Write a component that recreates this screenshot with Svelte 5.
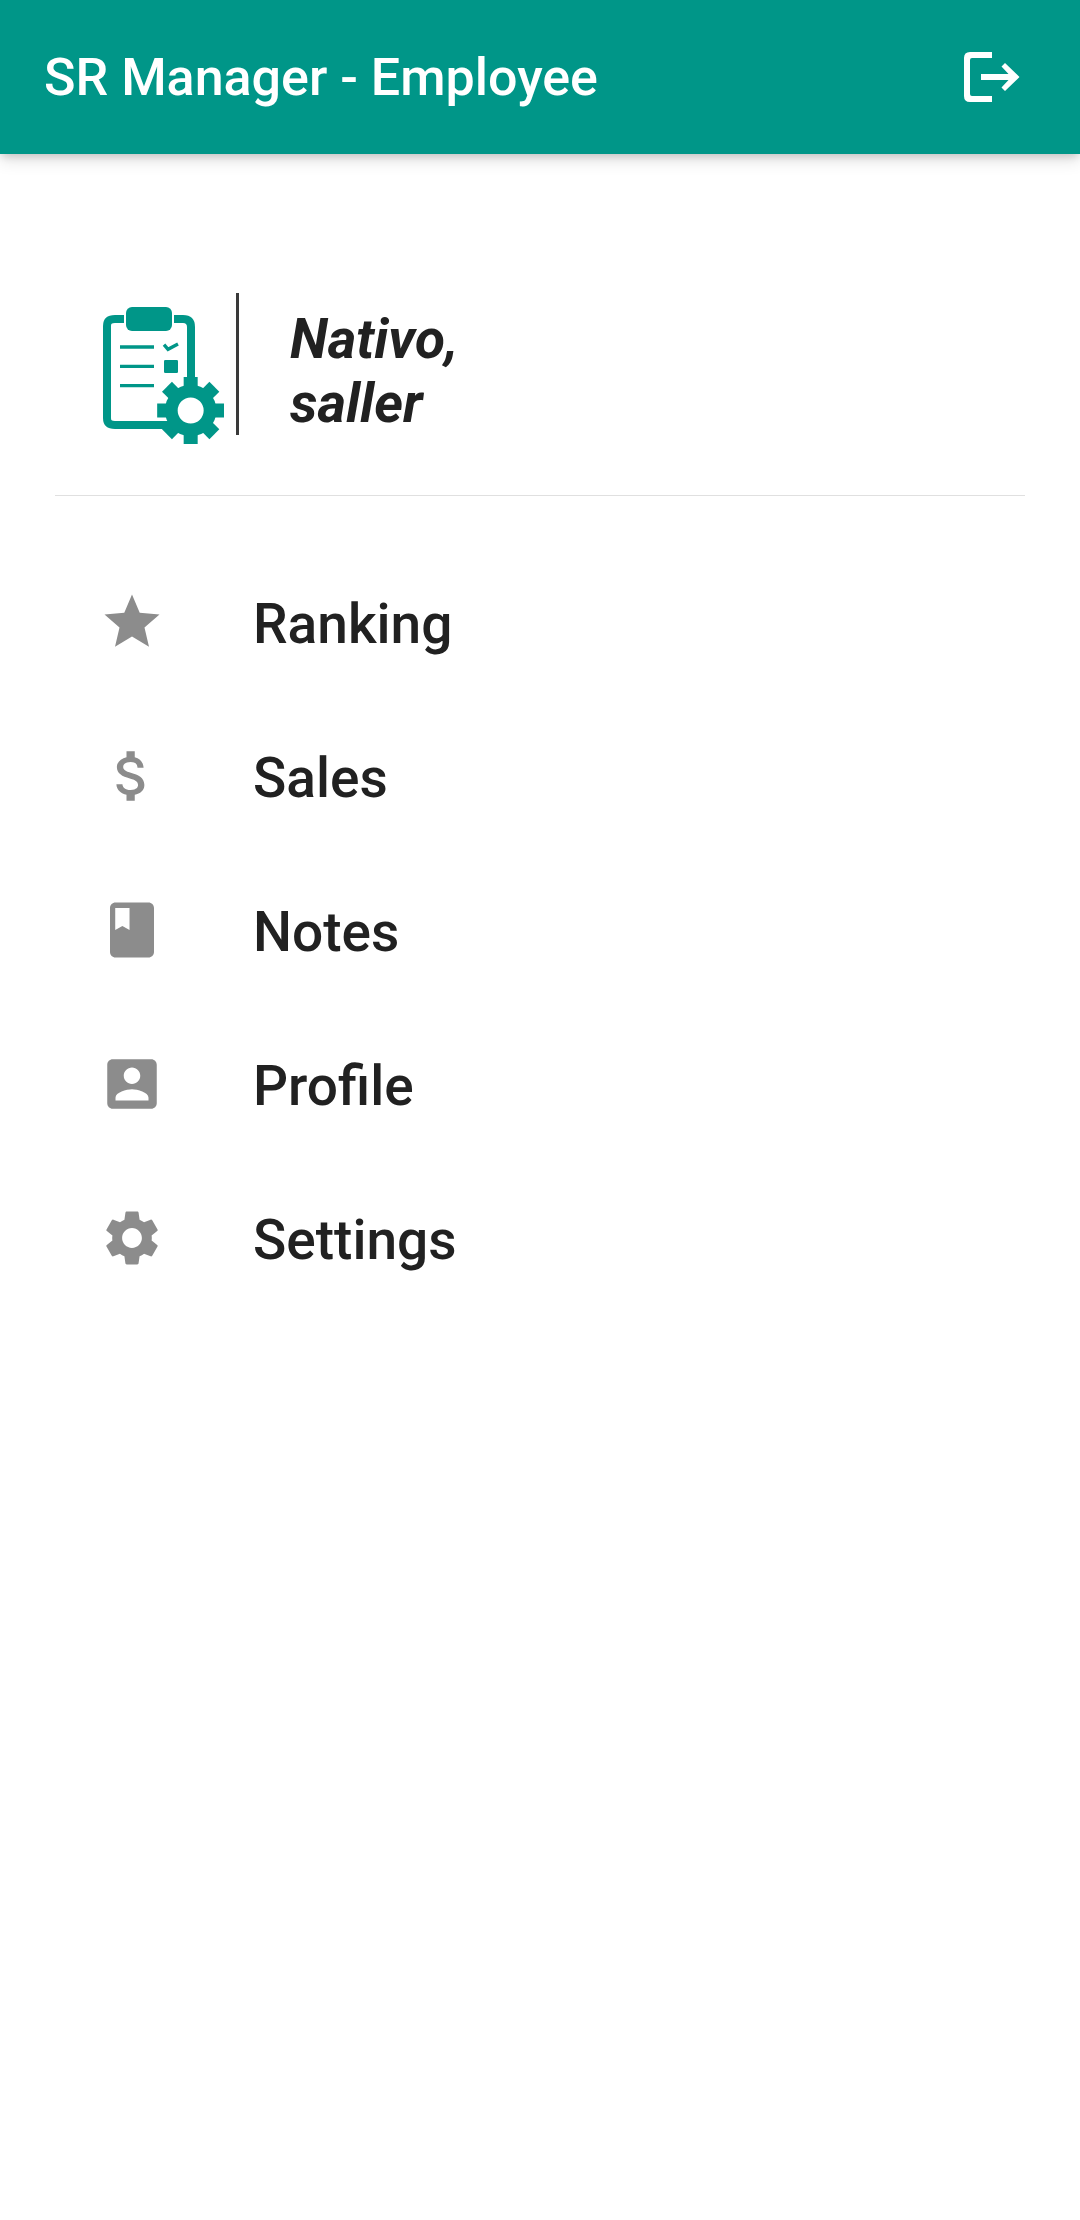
<script>
  const items = [
    {
      label: 'Ranking',
      path: 'M12 17.27 18.18 21l-1.64-7.03L22 9.24l-7.19-.61L12 2 9.19 8.63 2 9.24l5.46 4.73L5.82 21z'
    },
    {
      label: 'Sales',
      path: 'M11.8 10.9c-2.27-.59-3-1.2-3-2.15 0-1.09 1.01-1.85 2.7-1.85 1.78 0 2.44.85 2.5 2.1h2.21c-.07-1.72-1.12-3.3-3.21-3.81V3h-3v2.16c-1.94.42-3.5 1.68-3.5 3.61 0 2.31 1.91 3.46 4.7 4.13 2.5.6 3 1.48 3 2.41 0 .69-.49 1.79-2.7 1.79-2.06 0-2.87-.92-2.98-2.1h-2.2c.12 2.19 1.76 3.42 3.68 3.83V21h3v-2.15c1.95-.37 3.5-1.5 3.5-3.55 0-2.84-2.43-3.81-4.7-4.4z'
    },
    {
      label: 'Notes',
      path: 'M18 2H6c-1.1 0-2 .9-2 2v16c0 1.1.9 2 2 2h12c1.1 0 2-.9 2-2V4c0-1.1-.9-2-2-2zM5.9 4h5.2v8l-2.6-1.5L5.9 12z'
    },
    {
      label: 'Profile',
      path: 'M3 5v14c0 1.1.89 2 2 2h14c1.1 0 2-.9 2-2V5c0-1.1-.9-2-2-2H5c-1.11 0-2 .9-2 2zm12 4c0 1.66-1.34 3-3 3s-3-1.34-3-3 1.34-3 3-3 3 1.34 3 3zm-9 8c0-2 4-3.1 6-3.1s6 1.1 6 3.1v1H6v-1z'
    },
    {
      label: 'Settings',
      path: 'M19.14 12.94c.04-.3.06-.61.06-.94 0-.32-.02-.64-.07-.94l2.03-1.58c.18-.14.23-.41.12-.61l-1.92-3.32c-.12-.22-.37-.29-.59-.22l-2.39.96c-.5-.38-1.03-.7-1.62-.94l-.36-2.54c-.04-.24-.24-.41-.48-.41h-3.84c-.24 0-.43.17-.47.41l-.36 2.54c-.59.24-1.13.57-1.62.94l-2.39-.96c-.22-.08-.47 0-.59.22L2.74 8.87c-.12.21-.08.47.12.61l2.03 1.58c-.05.3-.09.63-.09.94s.02.64.07.94l-2.03 1.58c-.18.14-.23.41-.12.61l1.92 3.32c.12.22.37.29.59.22l2.39-.96c.5.38 1.03.7 1.62.94l.36 2.54c.05.24.24.41.48.41h3.84c.24 0 .44-.17.47-.41l.36-2.54c.59-.24 1.13-.56 1.62-.94l2.39.96c.22.08.47 0 .59-.22l1.92-3.32c.12-.22.07-.47-.12-.61l-2.01-1.58zM12 15.6c-1.98 0-3.6-1.62-3.6-3.6s1.62-3.6 3.6-3.6 3.6 1.62 3.6 3.6-1.62 3.6-3.6 3.6z'
    }
  ];
  const teeth = [0, 45, 90, 135, 180, 225, 270, 315];
</script>

<header class="bar">
  <h1>SR Manager - Employee</h1>
  <button class="logout" type="button" aria-label="Log out">
    <svg viewBox="0 0 60 60" aria-hidden="true">
      <path d="M30 5H8Q2 5 2 11V49Q2 55 8 55H30V49H10Q8 49 8 47V13Q8 11 10 11H30Z" />
      <path d="M43 16L57.5 30L43 44L39.5 40.5L46.5 33H19V27H46.5L39.5 19.5Z" />
    </svg>
  </button>
</header>

<main>
  <section class="profile">
    <svg class="logo" viewBox="69 81 363 411" aria-hidden="true">
      <path
        class="frame"
        d="M132 117H105Q81 117 81 138V414Q81 435 105 435H270M282 117H309Q333 117 333 141V300"
      />
      <rect x="138" y="81" width="138" height="72" rx="18" />
      <path class="line" d="M120 201H222M120 259H222M120 317H222" />
      <path class="line" d="M252 194L264 208L294 192" />
      <rect x="252" y="240" width="42" height="39" rx="4" />
      {#each teeth as angle}
        <rect x="311" y="291" width="42" height="50" transform="rotate({angle} 332 391.5)" />
      {/each}
      <circle class="ring" cx="332" cy="391.5" r="58" />
    </svg>
    <p class="name">Nativo,<br />saller</p>
  </section>

  <nav aria-label="Main menu">
    <ul>
      {#each items as item}
        <li>
          <a href="#{item.label.toLowerCase()}">
            <svg viewBox="0 0 24 24" aria-hidden="true">
              <path fill-rule="evenodd" d={item.path} />
            </svg>
            <span>{item.label}</span>
          </a>
        </li>
      {/each}
    </ul>
  </nav>
</main>

<style>
  :global(body) {
    margin: 0;
    background: #fff;
    color: #212121;
    font-family: Roboto, 'Liberation Sans', sans-serif;
  }
  .bar {
    display: flex;
    align-items: center;
    justify-content: space-between;
    min-height: 154px;
    padding: 0 58px 0 44px;
    box-sizing: border-box;
    background: #009688;
    color: #fff;
    box-shadow:
      0 4px 8px -2px rgba(0, 0, 0, 0.16),
      0 6px 16px rgba(0, 0, 0, 0.12);
  }
  h1 {
    margin: 0;
    padding-top: 2px;
    font-size: 52px;
    font-weight: 500;
    line-height: 64px;
  }
  .logout {
    display: flex;
    padding: 0;
    border: 0;
    background: none;
    color: inherit;
    cursor: pointer;
  }
  .logout svg {
    width: 60px;
    height: 60px;
    fill: currentColor;
  }
  main {
    padding: 139px 55px 0;
  }
  .profile {
    display: flex;
    align-items: flex-start;
    padding: 0 48px 51px;
    border-bottom: 1px solid #e0e0e0;
  }
  .logo {
    width: 121px;
    height: 137px;
    margin: 14px 12px 0 0;
    fill: #009688;
  }
  .frame,
  .line {
    fill: none;
    stroke: #009688;
    stroke-width: 24;
  }
  .line {
    stroke-width: 10;
  }
  .ring {
    fill: #fff;
    stroke: #009688;
    stroke-width: 38;
  }
  .name {
    margin: 0;
    padding: 14px 0 0 51px;
    border-left: 3px solid #3a3a3a;
    font-size: 55px;
    font-style: italic;
    font-weight: 700;
    line-height: 64px;
  }
  ul {
    margin: 0;
    padding: 49px 0 0;
    list-style: none;
  }
  a {
    display: flex;
    align-items: center;
    gap: 88px;
    min-height: 154px;
    padding-left: 44px;
    color: inherit;
    text-decoration: none;
  }
  a svg {
    width: 66px;
    height: 66px;
    fill: #8c8c8c;
  }
  a span {
    padding-top: 4px;
    font-size: 55px;
    font-weight: 500;
    line-height: 64px;
  }
</style>
